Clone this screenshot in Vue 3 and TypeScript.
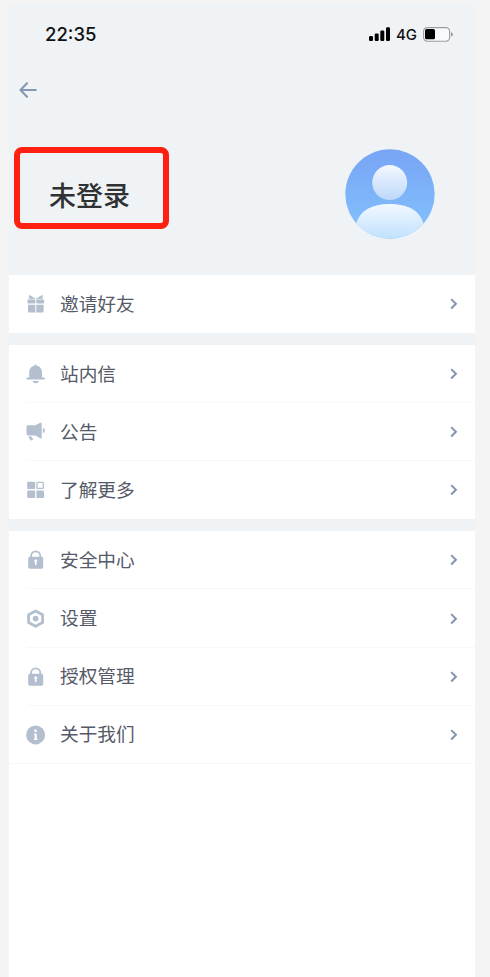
<script setup lang="ts">
type IconName = 'gift' | 'bell' | 'horn' | 'grid' | 'lock' | 'gear' | 'info'

interface MenuItem {
  icon: IconName
  label: string
}

const groups: MenuItem[][] = [
  [{ icon: 'gift', label: '邀请好友' }],
  [
    { icon: 'bell', label: '站内信' },
    { icon: 'horn', label: '公告' },
    { icon: 'grid', label: '了解更多' },
  ],
  [
    { icon: 'lock', label: '安全中心' },
    { icon: 'gear', label: '设置' },
    { icon: 'lock', label: '授权管理' },
    { icon: 'info', label: '关于我们' },
  ],
]
</script>

<template>
  <div class="page">
    <main class="phone">
      <header class="header">
        <div class="status">
          <span class="time">22:35</span>
          <div class="indicators">
            <svg class="signal" width="21" height="14" viewBox="0 0 21 14">
              <rect x="0" y="9" width="4" height="5" rx="1.2" />
              <rect x="5.7" y="6.5" width="4" height="7.5" rx="1.2" />
              <rect x="11.3" y="3.5" width="4" height="10.5" rx="1.2" />
              <rect x="17" y="0.3" width="4" height="13.7" rx="1.2" />
            </svg>
            <span class="network">4G</span>
            <svg class="battery" width="31" height="15" viewBox="0 0 31 15">
              <rect x="0.6" y="0.6" width="26" height="13.6" rx="3.6" fill="#f8fafb" stroke="#999b9d" stroke-width="1.1" />
              <rect x="2" y="2.1" width="10" height="10.2" rx="1.6" fill="#000" />
              <path d="M28 5.2Q30 5.8 30 7.4T28 9.6Z" fill="#999b9d" />
            </svg>
          </div>
        </div>
        <button class="back" aria-label="返回">
          <svg width="18" height="16" viewBox="0 0 18 16">
            <path d="M8 1.3L1.5 8L8 14.7M1.8 8H16.8" />
          </svg>
        </button>
        <section class="profile">
          <div class="name-box"><h1>未登录</h1></div>
          <svg class="avatar" width="90" height="90" viewBox="0 0 90 90">
            <defs>
              <linearGradient id="disc" x1="0" y1="0" x2="0" y2="1">
                <stop offset="0" stop-color="#78a4f5" />
                <stop offset="1" stop-color="#83c3fd" />
              </linearGradient>
              <linearGradient id="head" x1="0" y1="0" x2="0" y2="1">
                <stop offset="0" stop-color="#f3f8fe" />
                <stop offset="1" stop-color="#bdd8fb" />
              </linearGradient>
              <linearGradient id="torso" x1="0" y1="0" x2="0" y2="1">
                <stop offset="0" stop-color="#f2f8fe" />
                <stop offset="1" stop-color="#bfe1fd" />
              </linearGradient>
              <clipPath id="round"><circle cx="45" cy="45" r="44.7" /></clipPath>
            </defs>
            <circle cx="45" cy="45" r="44.7" fill="url(#disc)" />
            <circle cx="44.7" cy="33.6" r="17.5" fill="url(#head)" />
            <path d="M11 75C15 61 27 55 44.5 55S75 61 78.5 75V90H11Z" fill="url(#torso)" clip-path="url(#round)" />
          </svg>
        </section>
      </header>

      <nav class="menu">
        <ul v-for="(group, index) in groups" :key="index" class="group">
          <li v-for="item in group" :key="item.label" class="row">
            <svg class="icon" width="20" height="20" viewBox="0 0 20 20">
              <g v-if="item.icon === 'gift'">
                <path d="M3.3 1.2L9.2 4.8H3.2ZM16.2 1.2L10.3 4.8H16.3Z" stroke="#b3bfce" stroke-width="0.6" stroke-linejoin="round" />
                <rect x="1.5" y="5.6" width="7.8" height="4" rx="0.8" />
                <rect x="10.3" y="5.6" width="7.8" height="4" rx="0.8" />
                <path d="M2 10.7H9.3V18.5H3.2Q2 18.5 2 17.3ZM10.3 10.7H17.6V17.3Q17.6 18.5 16.4 18.5H10.3Z" />
              </g>
              <g v-else-if="item.icon === 'bell'">
                <path d="M9.6 0.2Q10.5 0.3 10.7 1.7C14 2.3 16 5 16 8.5V13.5H18.1Q19 13.8 19 14.6T18.1 15.5H1.2Q0.3 15.3 0.3 14.5T1.2 13.5H3.2V8.5C3.2 5 5.2 2.3 8.5 1.7Q8.7 0.3 9.6 0.2Z" />
                <path d="M6.5 16.9H12.8Q12.3 19.2 9.7 19.2T6.5 16.9Z" />
              </g>
              <g v-else-if="item.icon === 'horn'">
                <path d="M1.8 3.2H9.4L14.2 0.8Q15.7 0.3 15.7 1.8V15.6Q15.7 17 14.2 16.3L9.4 13.4H1.8Q0.5 13.4 0.5 12.1V4.5Q0.5 3.2 1.8 3.2Z" />
                <path d="M16.8 5.7Q18.9 6.3 18.9 8.4T16.8 11Z" />
                <path d="M2.2 14.5H5.3L7 17.1Q7.1 18.4 5.9 18.4Q4.7 18.6 4 17.6Z" />
              </g>
              <g v-else-if="item.icon === 'grid'">
                <rect x="1.2" y="1.7" width="8" height="7.4" rx="1" />
                <rect x="11" y="2.4" width="6.3" height="6" rx="0.7" fill="none" stroke="#b3bfce" stroke-width="1.3" />
                <rect x="1.2" y="10.6" width="7.9" height="7.4" rx="1" />
                <rect x="10.4" y="10.6" width="7.6" height="7.4" rx="1" />
              </g>
              <g v-else-if="item.icon === 'lock'">
                <path d="M5.1 8V6A4.6 4.6 0 0 1 14.3 6V8" fill="none" stroke="#b3bfce" stroke-width="1.8" />
                <rect x="2.2" y="6.7" width="15" height="12" rx="1.7" />
                <path d="M8.2 10.7A1.5 1.5 0 0 1 11.2 10.7Q11.2 11.7 10.6 12V15H8.9V12Q8.2 11.7 8.2 10.7Z" fill="#fff" />
              </g>
              <g v-else-if="item.icon === 'gear'">
                <path d="M9.6 2L16.6 5.7V13.5L9.6 17.3L2.6 13.5V5.7Z" fill="none" stroke="#b3bfce" stroke-width="2.8" stroke-linejoin="round" />
                <circle cx="9.6" cy="9.6" r="2.9" />
              </g>
              <g v-else>
                <circle cx="9.6" cy="9.9" r="9.5" />
                <circle cx="9.6" cy="5.8" r="1.4" fill="#fff" />
                <path d="M8 8.5H10.7V13.6H11.4V15H8V13.6H8.6V9.9H8Z" fill="#fff" />
              </g>
            </svg>
            <span class="label">{{ item.label }}</span>
            <svg class="chevron" width="8" height="12" viewBox="0 0 8 12">
              <path d="M1.2 1.1L5.9 5.8L1.2 10.5" />
            </svg>
          </li>
        </ul>
      </nav>
    </main>
  </div>
</template>

<style>
body {
  background: #f4f4f4;
}
</style>

<style scoped>
.page {
  box-sizing: border-box;
  height: 977px;
  padding: 4px 15px 0 9px;
  background: #f4f4f4;
  font-family: Inter, "Noto Sans CJK SC", sans-serif;
}
.phone {
  height: 973px;
  background: #fff;
}
.header {
  box-sizing: border-box;
  height: 271px;
  background: #eff3f6;
}
.status {
  display: flex;
  align-items: center;
  justify-content: space-between;
  height: 60px;
  padding: 0 21px 0 36px;
  color: #111;
}
.time {
  font-size: 18.5px;
  font-weight: 500;
}
.indicators {
  display: flex;
  align-items: center;
}
.signal {
  fill: #000;
}
.network {
  margin: 1px 6px 0 6px;
  font-size: 15px;
  font-weight: 450;
}
.back {
  display: flex;
  margin: 18px 0 0 10px;
  padding: 0;
  border: 0;
  background: none;
}
.back path {
  fill: none;
  stroke: #8497b3;
  stroke-width: 2.1;
  stroke-linecap: round;
  stroke-linejoin: round;
}
.profile {
  display: flex;
  align-items: flex-start;
  justify-content: space-between;
  margin-top: 49px;
  padding: 0 40px 0 5px;
}
.name-box {
  box-sizing: border-box;
  display: flex;
  align-items: center;
  width: 155px;
  height: 82px;
  padding: 17px 0 0 29px;
  border: 6px solid #ff2012;
  border-radius: 8px;
}
.avatar {
  margin-top: 2px;
}
h1 {
  margin: 0;
  color: #303133;
  font-size: 27px;
  font-weight: 500;
  line-height: 40px;
}
.menu {
  display: flex;
  flex-direction: column;
  gap: 12px;
  background: #eff3f6;
}
.group {
  margin: 0;
  padding: 0;
  background: #fff;
  list-style: none;
}
.row {
  box-sizing: border-box;
  display: flex;
  align-items: center;
  height: 58.1px;
  padding: 0 17px;
  background: linear-gradient(#f8f8f9, #f8f8f9) 18px 100% / 100% 1px no-repeat;
}
.group:not(:last-child) .row:last-child {
  background: none;
}
.group:last-child .row:last-child {
  background-position: 0 100%;
}
.icon {
  flex: none;
  fill: #b3bfce;
}
.label {
  flex: 1;
  margin: 1.4px 0 0 14px;
  color: #555a68;
  font-size: 18.7px;
  line-height: 28px;
}
.chevron {
  fill: none;
  stroke: #8395ad;
  stroke-width: 2;
}
</style>
